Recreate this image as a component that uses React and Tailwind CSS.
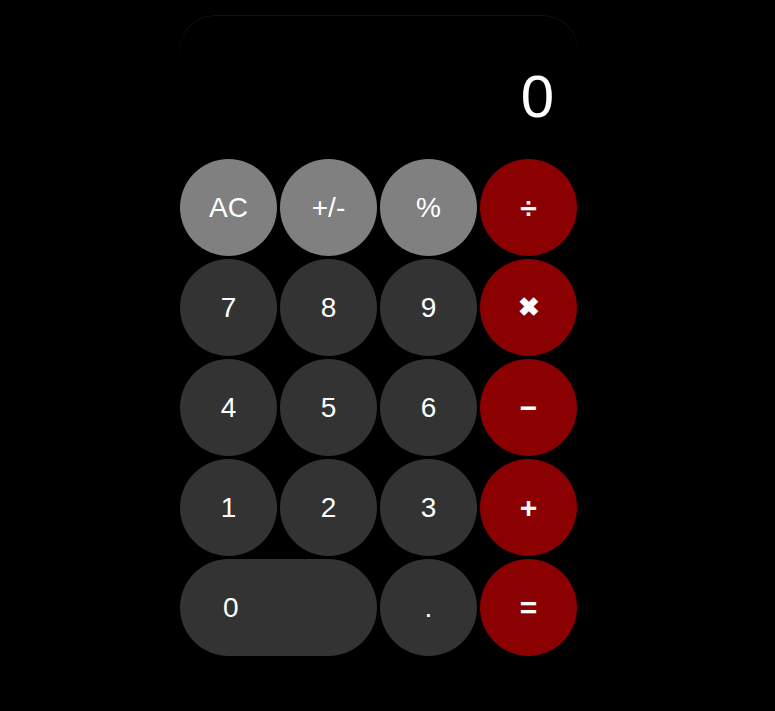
import React from "react";

const rows = [
  [
    { l: "AC", c: "bg-[#808080]" },
    { l: "+/-", c: "bg-[#808080]" },
    { l: "%", c: "bg-[#808080]" },
    { l: "÷", c: "bg-[#8b0000]", op: true },
  ],
  [
    { l: "7", c: "bg-[#333333]" },
    { l: "8", c: "bg-[#333333]" },
    { l: "9", c: "bg-[#333333]" },
    { l: "✖", c: "bg-[#8b0000]", op: true, x: true },
  ],
  [
    { l: "4", c: "bg-[#333333]" },
    { l: "5", c: "bg-[#333333]" },
    { l: "6", c: "bg-[#333333]" },
    { l: "−", c: "bg-[#8b0000]", op: true },
  ],
  [
    { l: "1", c: "bg-[#333333]" },
    { l: "2", c: "bg-[#333333]" },
    { l: "3", c: "bg-[#333333]" },
    { l: "+", c: "bg-[#8b0000]", op: true },
  ],
];

function Btn({ b }) {
  return (
    <button
      className={`${b.c} w-[97px] h-[97px] rounded-full flex items-center justify-center text-white ${
        b.op ? (b.x ? "text-[26px] font-bold" : "text-[30px] font-bold") : "text-[28px]"
      }`}
    >
      {b.l}
    </button>
  );
}

export default function App() {
  return (
    <div
      className="min-h-[711px] bg-black pt-[15px]"
      style={{ fontFamily: '"Liberation Sans", Arial, sans-serif' }}
    >
      <div className="relative ml-[179px] w-[400px]">
        <div className="absolute left-0 top-0 w-full h-[44px] rounded-t-[36px] border-t border-x border-[#111111] [mask-image:linear-gradient(to_bottom,black_30%,transparent)]" />
        <div className="h-[144px] flex items-end justify-end pr-[25px] pb-[32px]">
          <span className="text-white text-[60px] leading-none">0</span>
        </div>
        <div className="grid grid-cols-[repeat(4,97px)] gap-[3px] pl-[1px]">
          {rows.flat().map((b, i) => (
            <Btn key={i} b={b} />
          ))}
          <button className="col-span-2 h-[97px] rounded-full bg-[#333333] text-white text-[28px] flex items-center pl-[43px]">
            0
          </button>
          <button className="w-[97px] h-[97px] rounded-full bg-[#333333] text-white text-[28px] flex items-center justify-center">
            .
          </button>
          <button className="w-[97px] h-[97px] rounded-full bg-[#8b0000] text-white text-[30px] font-bold flex items-center justify-center">
            =
          </button>
        </div>
      </div>
    </div>
  );
}
